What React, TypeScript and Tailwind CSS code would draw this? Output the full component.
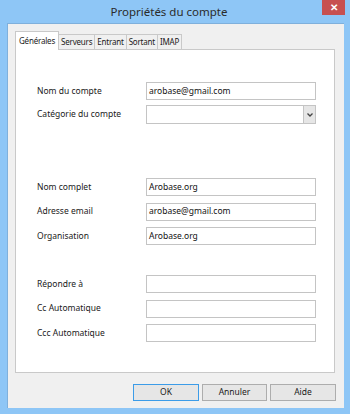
import React from 'react';

const font = { fontFamily: '"Noto Sans", "Open Sans", sans-serif' };

function Field({ label, value }: { label: string; value?: string }) {
  return (
    <div className="flex items-center h-[18px]">
      <div className="w-[109px] text-[8.5px] text-[#1a1a1a]">{label}</div>
      <div className="w-[170px] h-[18px] bg-white border border-[#c4c4c4] flex items-center px-[2px] text-[8.5px] text-[#111]">
        {value}
      </div>
    </div>
  );
}

export default function App() {
  const tabs = ['Serveurs', 'Entrant', 'Sortant', 'IMAP'];

  return (
    <div className="w-[350px] h-[414px] bg-[#8ec6f6] flex flex-col" style={font}>
      {/* title bar */}
      <div className="relative h-[23px] flex items-center justify-center text-[11.5px] text-[#2b2b2b] pr-[12px]">
        Propriétés du compte
        <div className="absolute top-0 right-[5px] w-[23px] h-[15px] bg-[#c75050] flex items-center justify-center text-white text-[10px] font-bold">
          ✕
        </div>
      </div>

      {/* client area */}
      <div className="flex-1 ml-[7px] mr-[6px] mb-[6px] bg-[#f0f0f0] border-l border-t border-[#7fb0dc] flex flex-col pl-[7px] pt-[8px]">
        {/* tabs */}
        <div className="flex items-end h-[17px] text-[8px] tracking-[-0.2px] text-[#1a1a1a]">
          <div className="relative z-10 h-[19px] -mb-[1px] px-[3px] bg-white border border-[#c9c9c9] border-b-0 flex items-center">
            Générales
          </div>
          {tabs.map((t) => (
            <div
              key={t}
              className="h-[15px] px-[2px] bg-[#f0f0f0] border border-[#c9c9c9] border-l-0 border-b-0 flex items-center"
            >
              {t}
            </div>
          ))}
        </div>

        {/* panel */}
        <div className="w-[320px] h-[324px] bg-white border border-[#c9c9c9] pl-[21px] pt-[32px] flex flex-col">
          <Field label="Nom du compte" value="arobase@gmail.com" />
          <div className="flex items-center h-[19px] mt-[5px]">
            <div className="w-[109px] text-[8.5px] text-[#1a1a1a]">Catégorie du compte</div>
            <div className="w-[170px] h-[19px] bg-white border border-[#c4c4c4] flex justify-end">
              <div className="w-[12px] h-full bg-[#e6e6e6] border-l border-[#c4c4c4] flex items-center justify-center">
                <svg width="6" height="4" viewBox="0 0 6 4">
                  <path d="M0.5 0.5 L3 3 L5.5 0.5" stroke="#444" strokeWidth="1.3" fill="none" />
                </svg>
              </div>
            </div>
          </div>

          <div className="flex flex-col gap-[6.5px] mt-[54px]">
            <Field label="Nom complet" value="Arobase.org" />
            <Field label="Adresse email" value="arobase@gmail.com" />
            <Field label="Organisation" value="Arobase.org" />
          </div>

          <div className="flex flex-col gap-[6.5px] mt-[30px]">
            <Field label="Répondre à" />
            <Field label="Cc Automatique" />
            <Field label="Ccc Automatique" />
          </div>
        </div>

        {/* buttons */}
        <div className="flex justify-end gap-[3px] mt-[11px] pr-[8px] text-[8.5px] text-[#1a1a1a]">
          <div className="w-[66px] h-[17px] bg-[#e6e6e6] border border-[#3c9ce8] flex items-center justify-center">OK</div>
          <div className="w-[65px] h-[17px] bg-[#e6e6e6] border border-[#adadad] flex items-center justify-center">Annuler</div>
          <div className="w-[66px] h-[17px] bg-[#e6e6e6] border border-[#adadad] flex items-center justify-center">Aide</div>
        </div>
      </div>
    </div>
  );
}
